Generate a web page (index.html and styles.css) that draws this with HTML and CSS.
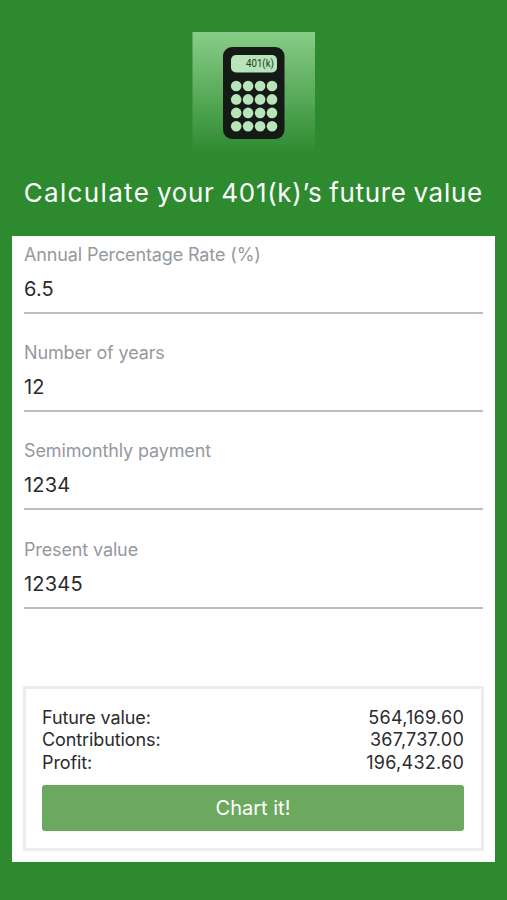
FILE: index.html
```
<!DOCTYPE html>
<html lang="en">
<head>
    <meta charset="UTF-8">
    <meta name="viewport" content="width=device-width, initial-scale=1.0">
    <title>401(k) Calculator</title>
    <link rel="stylesheet" href="styles.css">
</head>
<body>
    <header>
        <svg class="logo" width="123" height="122" viewBox="0 0 123 122">
            <defs>
                <linearGradient id="fade" x1="0" y1="0" x2="0" y2="1">
                    <stop offset="0" stop-color="#88cd88"/>
                    <stop offset="1" stop-color="#2d8a2f"/>
                </linearGradient>
            </defs>
            <rect x="0.5" width="122.5" height="122" fill="url(#fade)"/>
            <rect x="31" y="15" width="61.5" height="92" rx="9" fill="#151a17"/>
            <rect x="39" y="23" width="46" height="17.5" rx="5" fill="#b7e4b9"/>
            <text class="logo-text" x="54" y="35.3" textLength="28" lengthAdjust="spacingAndGlyphs">401(k)</text>
            <g fill="#b7e4b9">
                <circle cx="44.2" cy="54" r="5.3"/><circle cx="56.1" cy="54" r="5.3"/><circle cx="68.1" cy="54" r="5.3"/><circle cx="80" cy="54" r="5.3"/>
                <circle cx="44.2" cy="67.4" r="5.3"/><circle cx="56.1" cy="67.4" r="5.3"/><circle cx="68.1" cy="67.4" r="5.3"/><circle cx="80" cy="67.4" r="5.3"/>
                <circle cx="44.2" cy="80.9" r="5.3"/><circle cx="56.1" cy="80.9" r="5.3"/><circle cx="68.1" cy="80.9" r="5.3"/><circle cx="80" cy="80.9" r="5.3"/>
                <circle cx="44.2" cy="94.3" r="5.3"/><circle cx="56.1" cy="94.3" r="5.3"/><circle cx="68.1" cy="94.3" r="5.3"/><circle cx="80" cy="94.3" r="5.3"/>
            </g>
        </svg>
        <h1><span class="wide">Calculate</span> your 401(k)’s future value</h1>
    </header>

    <main class="card">
        <div class="field">
            <label for="rate">Annual Percentage Rate (%)</label>
            <input id="rate" type="text" value="6.5">
        </div>
        <div class="field">
            <label for="years">Number of years</label>
            <input id="years" type="text" value="12">
        </div>
        <div class="field">
            <label for="payment">Semimonthly payment</label>
            <input id="payment" type="text" value="1234">
        </div>
        <div class="field">
            <label for="present">Present value</label>
            <input id="present" type="text" value="12345">
        </div>

        <div class="results">
            <div class="row"><span>Future value:</span><span class="amount">564,169.60</span></div>
            <div class="row"><span>Contributions:</span><span class="amount">367,737.00</span></div>
            <div class="row"><span>Profit:</span><span class="amount">196,432.60</span></div>
            <button>Chart it!</button>
        </div>
    </main>
</body>
</html>
```
FILE: styles.css
```
* {
    box-sizing: border-box;
}
body {
    margin: 0;
    min-height: 900px;
    padding: 32px 12.5px 0 12px;
    background-color: #2d8a2f;
    font-family: Inter, sans-serif;
    color: #2b2b2d;
}
header {
    height: 204px;
    text-align: center;
}
.logo {
    display: block;
    margin: 0 auto;
}
.logo-text {
    font-family: Roboto, sans-serif;
    font-size: 10px;
    fill: #26382a;
}
h1 {
    margin: 19px 0 0;
    font-size: 26px;
    font-weight: 400;
    line-height: 40px;
    letter-spacing: 0.7px;
    word-spacing: -1.3px;
    white-space: nowrap;
    color: white;
}
.wide {
    letter-spacing: 1.35px;
}
.card {
    height: 626px;
    padding: 6px 11.5px 0 12px;
    background-color: white;
}
.field {
    height: 72px;
    margin-bottom: 26.2px;
    border-bottom: 2px solid #b9bdc0;
}
label {
    display: block;
    font-size: 18px;
    line-height: 26px;
    letter-spacing: -0.13px;
    color: #94999f;
}
input {
    display: block;
    width: 100%;
    height: 42px;
    padding: 0;
    border: none;
    outline: none;
    background: none;
    font-family: inherit;
    font-size: 20px;
    letter-spacing: 0.2px;
    color: #2b2b2d;
}
.results {
    height: 165px;
    margin: 77.2px -1px 0;
    padding: 18px 17px 0 16px;
    border: 3px solid #ececee;
}
.row {
    display: flex;
    justify-content: space-between;
    font-size: 18px;
    line-height: 22.5px;
    letter-spacing: -0.1px;
}
.amount {
    letter-spacing: 0.25px;
}
button {
    display: block;
    width: 100%;
    height: 46px;
    margin-top: 11px;
    padding: 0;
    border: none;
    border-radius: 3px;
    background-color: #6ba95f;
    font-family: inherit;
    font-size: 20px;
    color: white;
}
```
